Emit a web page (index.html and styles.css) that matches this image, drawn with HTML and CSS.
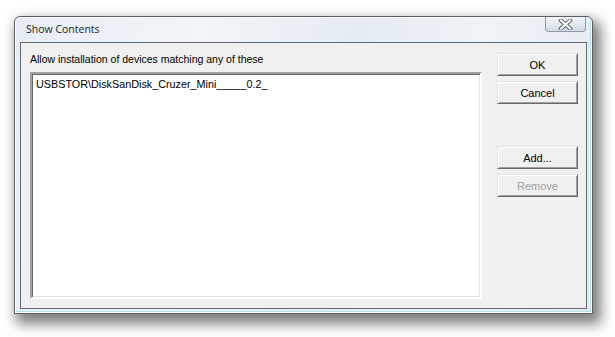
FILE: index.html
```html
<!DOCTYPE html>
<html>
<head>
<meta charset="utf-8">
<link rel="stylesheet" href="styles.css">
</head>
<body>
<div class="window">
  <div class="titlebar">
    <span class="title">Show Contents</span>
    <div class="close">
      <svg width="15" height="11" viewBox="0 0 15 11">
        <path d="M3 1.5 L12 9.5 M12 1.5 L3 9.5" stroke="#5d6670" stroke-width="4" stroke-linecap="square" fill="none"/>
        <path d="M3 1.5 L12 9.5 M12 1.5 L3 9.5" stroke="#ffffff" stroke-width="2" stroke-linecap="square" fill="none"/>
      </svg>
    </div>
  </div>
  <div class="client">
    <div class="listcol">
      <div class="label">Allow installation of devices matching any of these</div>
      <div class="listbox">
        <div class="item">USBSTOR\DiskSanDisk_Cruzer_Mini_____0.2_</div>
      </div>
    </div>
    <div class="btncol">
      <button class="btn">OK</button>
      <button class="btn">Cancel</button>
      <button class="btn btn-add">Add...</button>
      <button class="btn" disabled>Remove</button>
    </div>
  </div>
</div>
</body>
</html>
```

FILE: styles.css
```css
html, body {
  margin: 0;
  padding: 0;
  background: #ffffff;
}
body {
  padding: 16px 0 0 14px;
  width: 615px;
  height: 337px;
  box-sizing: border-box;
  overflow: hidden;
}
.window {
  width: 579px;
  height: 298px;
  box-sizing: border-box;
  border: 1px solid #5a5f66;
  border-radius: 6px 6px 0 0;
  background: linear-gradient(100deg, #e6edf4 0%, #f1f5f9 30%, #e4ebf2 55%, #eef3f7 75%, #e3eaf1 100%);
  box-shadow: 5px 7px 13px 3px rgba(0,0,0,0.5), inset 0 0 0 1px #ffffff, inset -1px -1px 0 1px #b6e2ee;
  display: flex;
  flex-direction: column;
  padding: 0 5px 4px 5px;
}
.titlebar {
  height: 25px;
  display: flex;
  align-items: center;
  justify-content: space-between;
  flex-shrink: 0;
}
.title {
  font-family: "Open Sans", sans-serif;
  font-size: 10.5px;
  color: #1e1e1e;
  padding-left: 6px;
  margin-top: -2px;
}
.close {
  align-self: flex-start;
  width: 41px;
  height: 15px;
  box-sizing: border-box;
  margin-right: 1px;
  border: 1px solid #8d9aa7;
  border-top: none;
  border-radius: 0 0 4px 4px;
  background: linear-gradient(#f2f5f8, #dfe6ed 60%, #d4dde6);
  display: flex;
  align-items: center;
  justify-content: center;
}
.client {
  flex: 1;
  border: 1px solid #626a70;
  background: #f0f0f0;
  display: grid;
  grid-template-columns: 1fr 81px;
  column-gap: 15px;
  padding: 10px 8px 9px 9px;
  font-family: "Liberation Sans", Arial, sans-serif;
  font-size: 10.5px;
  color: #000;
}
.listcol {
  display: flex;
  flex-direction: column;
}
.label {
  height: 19px;
  line-height: 13px;
}
.listbox {
  flex: 1;
  background: #ffffff;
  border-style: solid;
  border-width: 2px;
  border-color: #a0a0a0 #ffffff #ffffff #a0a0a0;
  box-shadow: inset 1px 1px 0 #696969, inset -1px -1px 0 #e3e3e3;
  padding: 4px 4px;
}
.item {
  line-height: 13px;
  font-size: 10.8px;
}
.btncol {
  display: flex;
  flex-direction: column;
}
.btn {
  height: 23px;
  width: 81px;
  margin: 0 0 5px 0;
  padding: 0;
  font-family: "Liberation Sans", Arial, sans-serif;
  font-size: 11px;
  color: #000;
  background: #f0f0f0;
  border-style: solid;
  border-width: 1px;
  border-color: #e3e3e3 #696969 #696969 #e3e3e3;
  box-shadow: inset 1px 1px 0 #ffffff, inset -1px -1px 0 #a0a0a0;
  border-radius: 0;
}
.btn-add {
  margin-top: 37px;
}
.btn:disabled {
  color: #a0a0a0;
}
```
